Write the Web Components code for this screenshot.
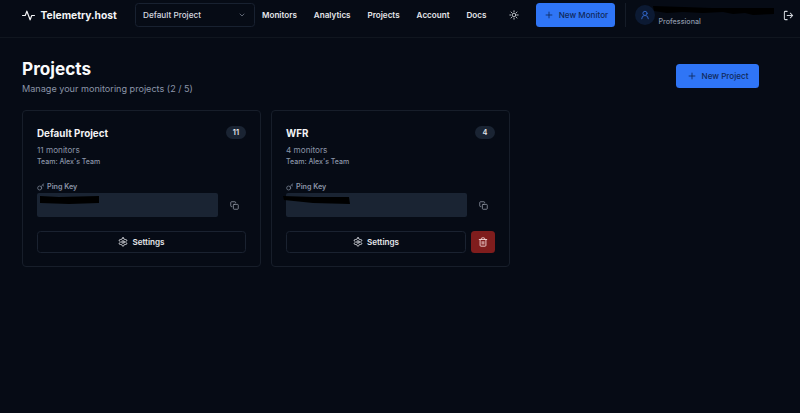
<!DOCTYPE html>
<html lang="en">
<head>
<meta charset="utf-8">
<title>Projects - Telemetry.host</title>
<style>
  html, body { margin: 0; height: 100%; background: #060b15; }
  body { font-family: Inter, "Liberation Sans", sans-serif; color: #f3f4f6; overflow: hidden; }
</style>
</head>
<body>
<app-header></app-header>
<main-page>
  <project-card name="Default Project" count="11" monitors="11 monitors" team="Team: Alex's Team" scribble="a"></project-card>
  <project-card name="WFR" count="4" monitors="4 monitors" team="Team: Alex's Team" scribble="b" deletable></project-card>
</main-page>
<script>
const plus = `<svg width="10" height="10" viewBox="0 0 24 24" fill="none" stroke="currentColor" stroke-width="2" stroke-linecap="round"><path d="M5 12h14M12 5v14"/></svg>`;

class PrimaryButton extends HTMLElement {
  constructor() {
    super();
    this.attachShadow({ mode: "open" });
    this.shadowRoot.innerHTML = `
    <style>
      :host {
        display: inline-flex;
        align-items: center;
        justify-content: center;
        gap: 5px;
        height: 23.5px;
        background: #2f75f6;
        color: #10295a;
        border-radius: 3.5px;
        font-size: 8.1px;
        font-weight: 500;
        box-sizing: border-box;
        white-space: nowrap;
      }
      svg { display: block; flex: none; }
    </style>
    ${plus}<slot></slot>`;
  }
}
customElements.define("primary-button", PrimaryButton);

class AppHeader extends HTMLElement {
  constructor() {
    super();
    this.attachShadow({ mode: "open" });
    this.shadowRoot.innerHTML = `
    <style>
      :host {
        display: flex;
        align-items: center;
        height: 30px;
        padding: 0 6px 7px 22px;
        border-bottom: 1px solid #10161f;
        box-sizing: content-box;
      }
      .logo { display: flex; align-items: center; gap: 5.5px; font-size: 10.3px; font-weight: 700; color: #f3f4f6; width: 113px; flex: none; }
      .logo svg { flex: none; }
      .select {
        flex: none;
        width: 120px;
        height: 24px;
        box-sizing: border-box;
        border: 1px solid #182130;
        border-radius: 3.5px;
        display: flex;
        align-items: center;
        justify-content: space-between;
        padding: 0 8px 0 7px;
        font-size: 8.2px;
        font-weight: 500;
        color: #d6dae0;
      }
      nav { display: flex; gap: 17px; margin-left: 7px; font-size: 8.1px; font-weight: 600; color: #e5e7eb; flex: none; }
      .sun { margin-left: 23px; display: block; color: #d1d5db; flex: none; }
      primary-button { margin-left: 17px; flex: none; width: 79px; }
      .sep { width: 1px; height: 24px; background: #151c28; margin-left: 10px; flex: none; }
      .avatar {
        width: 20px; height: 20px; border-radius: 50%; background: #0c1a33; color: #2f62c0;
        display: flex; align-items: center; justify-content: center; margin-left: 9px; flex: none;
      }
      .user { margin-left: 3px; width: 125px; flex: none; height: 24px; position: relative; }
      .plan { position: absolute; left: 0; top: 13.5px; font-size: 7.2px; font-weight: 500; color: #8b95a8; }
      .scribble { position: absolute; left: -5px; top: 2px; }
      .logout { display: block; color: #d1d5db; flex: none; }
    </style>
    <div class="logo">
      <svg width="13" height="13" viewBox="0 0 24 24" fill="none" stroke="currentColor" stroke-width="2.2" stroke-linecap="round" stroke-linejoin="round"><path d="M23 12h-5l-3 8L9 4l-3 8H1"/></svg>
      Telemetry.host
    </div>
    <div class="select">Default Project
      <svg width="8" height="8" viewBox="0 0 24 24" fill="none" stroke="#8a93a1" stroke-width="2" stroke-linecap="round" stroke-linejoin="round"><path d="m6 9 6 6 6-6"/></svg>
    </div>
    <nav><span>Monitors</span><span>Analytics</span><span>Projects</span><span>Account</span><span>Docs</span></nav>
    <svg class="sun" width="10" height="10" viewBox="0 0 24 24" fill="none" stroke="currentColor" stroke-width="2.2" stroke-linecap="round"><circle cx="12" cy="12" r="4.5"/><path d="M12 2v2M12 20v2M4.9 4.9l1.4 1.4M17.7 17.7l1.4 1.4M2 12h2M20 12h2M4.9 19.1l1.4-1.4M17.7 6.3l1.4-1.4"/></svg>
    <primary-button>New Monitor</primary-button>
    <div class="sep"></div>
    <div class="avatar">
      <svg width="10" height="10" viewBox="0 0 24 24" fill="none" stroke="currentColor" stroke-width="2.4" stroke-linecap="round" stroke-linejoin="round"><circle cx="12" cy="8" r="5"/><path d="M20 21a8 8 0 0 0-16 0"/></svg>
    </div>
    <div class="user">
      <svg class="scribble" width="122" height="11" viewBox="0 0 122 11"><path d="M0 1 L30 2 L58 3 L92 3 L121 3 L121 9 L100 10 L92 8 L80 9 L70 7 L50 8 L30 7 L14 8 L1 6 Z" fill="#000"/></svg>
      <span class="plan">Professional</span>
    </div>
    <svg class="logout" width="11" height="11" viewBox="0 0 24 24" fill="none" stroke="currentColor" stroke-width="2.2" stroke-linecap="round" stroke-linejoin="round"><path d="M9 21H5a2 2 0 0 1-2-2V5a2 2 0 0 1 2-2h4"/><path d="m16 17 5-5-5-5"/><path d="M21 12H9"/></svg>`;
  }
}
customElements.define("app-header", AppHeader);

class MainPage extends HTMLElement {
  constructor() {
    super();
    this.attachShadow({ mode: "open" });
    this.shadowRoot.innerHTML = `
    <style>
      :host { display: block; padding: 19px 41px 0 22px; }
      .top { display: flex; justify-content: space-between; align-items: center; margin-bottom: 15px; }
      h1 { margin: 0; font-size: 17.2px; line-height: 24px; font-weight: 700; color: #f9fafb; }
      p { margin: 1px 0 0; font-size: 9.1px; line-height: 13px; color: #8b95a8; }
      .grid { display: grid; grid-template-columns: 239px 239px; gap: 10px; }
      primary-button { width: 83px; }
    </style>
    <div class="top">
      <div><h1>Projects</h1><p>Manage your monitoring projects (2 / 5)</p></div>
      <primary-button>New Project</primary-button>
    </div>
    <div class="grid"><slot></slot></div>`;
  }
}
customElements.define("main-page", MainPage);

class ProjectCard extends HTMLElement {
  constructor() {
    super();
    this.attachShadow({ mode: "open" });
  }

  connectedCallback() {
    const get = (n) => this.getAttribute(n) ?? "";
    const scribble = get("scribble") === "a"
      ? `<svg class="scribble" style="left:2px;top:2px" width="61" height="10" viewBox="0 0 61 10"><path d="M1 1 L20 2 L60 1 L60 8 L30 9 L1 8 Z" fill="#000"/></svg>`
      : `<svg class="scribble" style="left:-3px;top:3px" width="68" height="10" viewBox="0 0 68 10"><path d="M0 0 L30 1 L66 1 L67 8 L30 7 L1 4 Z" fill="#000"/></svg>`;
    const trash = this.hasAttribute("deletable") ? `
      <div class="trash">
        <svg width="10" height="10" viewBox="0 0 24 24" fill="none" stroke="currentColor" stroke-width="2.2" stroke-linecap="round" stroke-linejoin="round"><path d="M3 6h18"/><path d="M19 6v14a2 2 0 0 1-2 2H7a2 2 0 0 1-2-2V6"/><path d="M8 6V4a2 2 0 0 1 2-2h4a2 2 0 0 1 2 2v2"/><path d="M10 11v6M14 11v6"/></svg>
      </div>` : "";
    this.shadowRoot.innerHTML = `
    <style>
      :host {
        display: block;
        height: 157px;
        box-sizing: border-box;
        padding: 14px;
        border: 1px solid #171e2a;
        border-radius: 4px;
        background: #060b15;
      }
      .head { display: flex; justify-content: space-between; align-items: flex-start; height: 19px; }
      .name { font-size: 9.8px; line-height: 16px; font-weight: 700; color: #f3f4f6; padding-top: 1px; }
      .count {
        min-width: 20px; height: 13px; box-sizing: border-box; padding: 0 5px; border-radius: 7px;
        background: #1a2433; color: #e5e7eb; font-size: 7.4px; font-weight: 600; margin-top: 1px;
        display: flex; align-items: center; justify-content: center;
      }
      .monitors { font-size: 8.2px; line-height: 12px; color: #8b95a8; margin-top: 0; }
      .team { font-size: 7px; line-height: 11px; font-weight: 500; color: #8b95a8; margin-top: 0; }
      .label { display: flex; align-items: center; gap: 2px; font-size: 7.2px; line-height: 11px; font-weight: 600; color: #8b95a8; margin-top: 14px; }
      .key-row { display: flex; align-items: center; margin-top: 1px; position: relative; }
      .key { width: 181px; height: 24px; background: #1a2433; border-radius: 2px; flex: none; }
      .copy { display: block; margin-left: 12px; color: #9ca3af; flex: none; }
      .scribble { position: absolute; }
      .actions { display: flex; gap: 5px; margin-top: 14px; }
      .settings {
        flex: 1; height: 22px; box-sizing: border-box; border: 1px solid #1a2230; border-radius: 3.5px;
        display: flex; align-items: center; justify-content: center; gap: 4px;
        font-size: 8.1px; font-weight: 600; color: #e5e7eb;
      }
      .trash {
        width: 24px; height: 22px; border-radius: 3.5px; background: #7f1d1d; color: #f3d5d5;
        display: flex; align-items: center; justify-content: center; flex: none;
      }
      svg { display: block; }
    </style>
    <div class="head"><div class="name">${get("name")}</div><div class="count">${get("count")}</div></div>
    <div class="monitors">${get("monitors")}</div>
    <div class="team">${get("team")}</div>
    <div class="label">
      <svg width="8" height="8" viewBox="0 0 24 24" fill="none" stroke="currentColor" stroke-width="2" stroke-linecap="round" stroke-linejoin="round"><circle cx="8" cy="15" r="6"/><path d="m12.5 10.5 8-8M17 6l3 3"/></svg>
      Ping Key
    </div>
    <div class="key-row"><div class="key"></div>${scribble}
      <svg class="copy" width="9" height="9" viewBox="0 0 24 24" fill="none" stroke="currentColor" stroke-width="2" stroke-linecap="round" stroke-linejoin="round"><rect x="9" y="9" width="13" height="13" rx="2"/><path d="M5 15H4a2 2 0 0 1-2-2V4a2 2 0 0 1 2-2h9a2 2 0 0 1 2 2v1"/></svg>
    </div>
    <div class="actions">
      <div class="settings">
        <svg width="10" height="10" viewBox="0 0 24 24" fill="none" stroke="currentColor" stroke-width="2.2" stroke-linecap="round" stroke-linejoin="round"><path d="M12.22 2h-.44a2 2 0 0 0-2 2v.18a2 2 0 0 1-1 1.73l-.43.25a2 2 0 0 1-2 0l-.15-.08a2 2 0 0 0-2.73.73l-.22.38a2 2 0 0 0 .73 2.73l.15.1a2 2 0 0 1 1 1.72v.51a2 2 0 0 1-1 1.74l-.15.09a2 2 0 0 0-.73 2.73l.22.38a2 2 0 0 0 2.73.73l.15-.08a2 2 0 0 1 2 0l.43.25a2 2 0 0 1 1 1.73V20a2 2 0 0 0 2 2h.44a2 2 0 0 0 2-2v-.18a2 2 0 0 1 1-1.73l.43-.25a2 2 0 0 1 2 0l.15.08a2 2 0 0 0 2.73-.73l.22-.39a2 2 0 0 0-.73-2.73l-.15-.08a2 2 0 0 1-1-1.74v-.5a2 2 0 0 1 1-1.74l.15-.09a2 2 0 0 0 .73-2.73l-.22-.38a2 2 0 0 0-2.73-.73l-.15.08a2 2 0 0 1-2 0l-.43-.25a2 2 0 0 1-1-1.73V4a2 2 0 0 0-2-2z"/><circle cx="12" cy="12" r="3"/></svg>
        Settings
      </div>${trash}
    </div>`;
  }
}
customElements.define("project-card", ProjectCard);
</script>
</body>
</html>
